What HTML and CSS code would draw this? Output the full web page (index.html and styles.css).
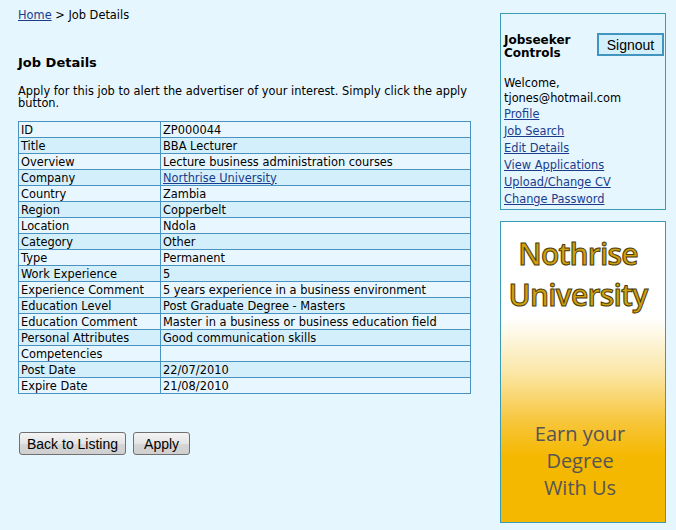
FILE: index.html
```html
<!DOCTYPE html>
<html>
<head>
<meta charset="utf-8">
<link rel="stylesheet" href="styles.css">
</head>
<body>
<div class="page">
  <div class="main">
    <div class="crumb"><a href="#">Home</a> &gt; Job Details</div>
    <h2 class="title">Job Details</h2>
    <p class="intro">Apply for this job to alert the advertiser of your interest. Simply click the apply button.</p>
    <table class="details">
      <tr><td class="k">ID</td><td>ZP000044</td></tr>
      <tr><td class="k">Title</td><td>BBA Lecturer</td></tr>
      <tr><td class="k">Overview</td><td>Lecture business administration courses</td></tr>
      <tr><td class="k">Company</td><td><a href="#">Northrise University</a></td></tr>
      <tr><td class="k">Country</td><td>Zambia</td></tr>
      <tr><td class="k">Region</td><td>Copperbelt</td></tr>
      <tr><td class="k">Location</td><td>Ndola</td></tr>
      <tr><td class="k">Category</td><td>Other</td></tr>
      <tr><td class="k">Type</td><td>Permanent</td></tr>
      <tr><td class="k">Work Experience</td><td>5</td></tr>
      <tr><td class="k">Experience Comment</td><td>5 years experience in a business environment</td></tr>
      <tr><td class="k">Education Level</td><td>Post Graduate Degree - Masters</td></tr>
      <tr><td class="k">Education Comment</td><td>Master in a business or business education field</td></tr>
      <tr><td class="k">Personal Attributes</td><td>Good communication skills</td></tr>
      <tr><td class="k">Competencies</td><td></td></tr>
      <tr><td class="k">Post Date</td><td>22/07/2010</td></tr>
      <tr><td class="k">Expire Date</td><td>21/08/2010</td></tr>
    </table>
    <div class="actions">
      <button class="btn">Back to Listing</button>
      <button class="btn btn-apply">Apply</button>
    </div>
  </div>
  <div class="side">
    <div class="panel">
      <div class="panel-head">
        <div class="panel-title">Jobseeker<br>Controls</div>
        <button class="signout">Signout</button>
      </div>
      <div class="welcome">Welcome,<br>tjones@hotmail.com</div>
      <ul class="links">
        <li><a href="#">Profile</a></li>
        <li><a href="#">Job Search</a></li>
        <li><a href="#">Edit Details</a></li>
        <li><a href="#">View Applications</a></li>
        <li><a href="#">Upload/Change CV</a></li>
        <li><a href="#">Change Password</a></li>
      </ul>
    </div>
    <div class="ad">
      <div class="ad-name">Nothrise<br>University</div>
      <div class="ad-slogan">Earn your<br>Degree<br>With Us</div>
    </div>
  </div>
</div>
</body>
</html>
```
FILE: styles.css
```css
html, body {
  margin: 0;
  padding: 0;
  background: #e6f6ff;
}
body {
  font-family: "DejaVu Sans", Verdana, sans-serif;
  font-size: 11.4px;
  color: #000;
}
a { color: #1a3c8c; }
.page {
  display: flex;
  align-items: flex-start;
  padding-left: 18px;
}
.main {
  width: 452px;
}
.crumb {
  margin-top: 9px;
  line-height: 13px;
}
.title {
  margin: 33px 0 0;
  font-size: 13px;
  line-height: 16px;
  font-weight: bold;
}
.intro {
  margin: 14px 0 0;
  line-height: 12px;
}
.details {
  margin-top: 12px;
  width: 453px;
  border-collapse: collapse;
  border: 1px solid #4a93c0;
}
.details td {
  border: 1px solid #4a93c0;
  padding: 0 2px;
  height: 15px;
  line-height: 14px;
  vertical-align: middle;
}
.details td.k { width: 137px; }
.details tr:nth-child(odd) td { background: #e8f7ff; }
.details tr:nth-child(even) td { background: #d3effc; }
.actions {
  margin-top: 38px;
  display: flex;
  gap: 7px;
  padding-left: 1px;
}
.btn {
  font-family: "Liberation Sans", Arial, sans-serif;
  font-size: 14px;
  height: 23px;
  padding: 0 7px;
  border: 1px solid #707070;
  border-radius: 3px;
  background: linear-gradient(#f4f4f4, #e4e4e4 50%, #d6d6d6 51%, #cfcfcf);
  color: #000;
}
.btn-apply { min-width: 57px; }
.side {
  width: 166px;
  margin-left: 30px;
  margin-top: 13px;
}
.panel {
  border: 1px solid #3a9bb4;
  padding: 0 3px 1px;
}
.panel-head {
  display: flex;
  justify-content: space-between;
  align-items: center;
  margin-top: 20px;
}
.panel-title {
  font-weight: bold;
  font-size: 12px;
  line-height: 13px;
}
.signout {
  font-family: "Liberation Sans", Arial, sans-serif;
  font-size: 14px;
  width: 67px;
  height: 23px;
  padding: 0;
  background: #d4effc;
  border: 2px solid #3f95c0;
  color: #000;
  margin-right: -2px;
  margin-top: -5px;
}
.welcome {
  margin-top: 16px;
  line-height: 15px;
}
.links {
  list-style: none;
  margin: 0;
  padding: 0;
}
.links li {
  line-height: 17px;
}
.ad {
  margin-top: 11px;
  height: 300px;
  border: 1px solid #3a9bb4;
  background: linear-gradient(#ffffff 0px, #ffffff 95px, #fbe7a8 150px, #f7c53a 200px, #f5b800 235px, #f5b800 300px);
  text-align: center;
}
.ad-name {
  font-family: "Open Sans", sans-serif;
  font-weight: 600;
  font-size: 30px;
  line-height: 41px;
  color: #d0a010;
  -webkit-text-stroke: 1px #4a3a08;
  margin-top: 11px;
  letter-spacing: -0.8px;
  padding-right: 10px;
}
.ad-slogan {
  font-family: "Open Sans", sans-serif;
  font-size: 20px;
  line-height: 27px;
  color: #555;
  margin-top: 105px;
  padding-right: 6px;
}
```
